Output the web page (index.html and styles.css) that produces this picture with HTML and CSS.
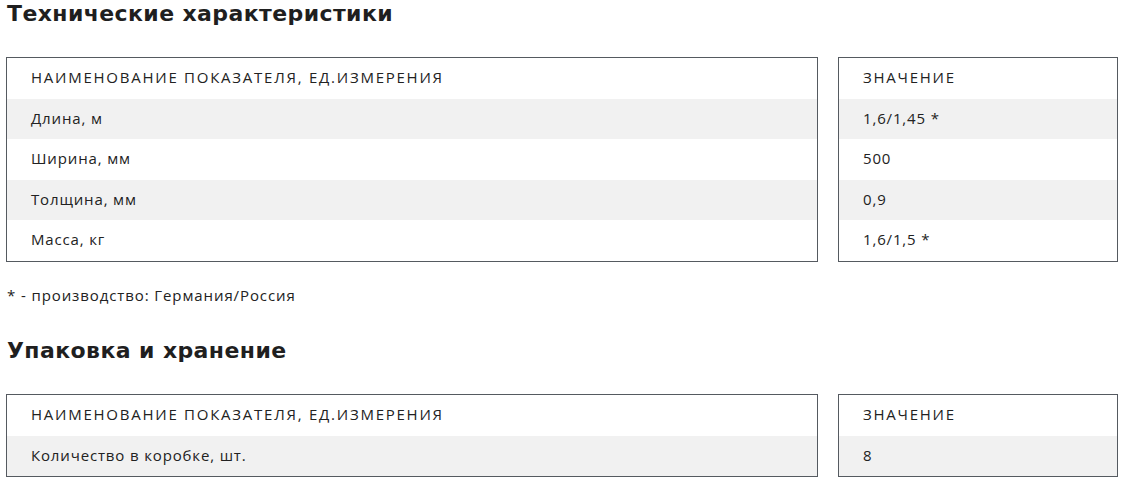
FILE: index.html
```html
<!DOCTYPE html>
<html lang="ru">
<head>
<meta charset="utf-8">
<link rel="stylesheet" href="styles.css">
</head>
<body>
<div class="page">
  <h2 class="title">Технические характеристики</h2>
  <div class="tables">
    <div class="tbl tbl-name">
      <div class="row head">НАИМЕНОВАНИЕ ПОКАЗАТЕЛЯ, ЕД.ИЗМЕРЕНИЯ</div>
      <div class="row alt">Длина, м</div>
      <div class="row">Ширина, мм</div>
      <div class="row alt">Толщина, мм</div>
      <div class="row">Масса, кг</div>
    </div>
    <div class="tbl tbl-value">
      <div class="row head">ЗНАЧЕНИЕ</div>
      <div class="row alt">1,6/1,45 *</div>
      <div class="row">500</div>
      <div class="row alt">0,9</div>
      <div class="row">1,6/1,5 *</div>
    </div>
  </div>
  <p class="note">* - производство: Германия/Россия</p>
  <h2 class="title title-2">Упаковка и хранение</h2>
  <div class="tables">
    <div class="tbl tbl-name">
      <div class="row head">НАИМЕНОВАНИЕ ПОКАЗАТЕЛЯ, ЕД.ИЗМЕРЕНИЯ</div>
      <div class="row alt">Количество в коробке, шт.</div>
    </div>
    <div class="tbl tbl-value">
      <div class="row head">ЗНАЧЕНИЕ</div>
      <div class="row alt">8</div>
    </div>
  </div>
</div>
</body>
</html>
```
FILE: styles.css
```css
html, body {
  margin: 0;
  padding: 0;
  background: #fff;
}
.page {
  padding: 0 8px 0 6px;
  font-family: "Open Sans", "Noto Sans", sans-serif;
  color: #222;
}
.title {
  margin: 0;
  padding-left: 1px;
  font-family: "DejaVu Sans", sans-serif;
  font-size: 22px;
  line-height: 28px;
  font-weight: 700;
  letter-spacing: 0.4px;
  color: #1f1f1f;
}
.tables {
  display: flex;
  gap: 20px;
  margin-top: 29px;
}
.tbl {
  border: 1px solid #555a60;
}
.tbl-name {
  flex: 1;
}
.tbl-value {
  width: 278px;
}
.row {
  height: 40.6px;
  line-height: 39px;
  padding-left: 24px;
  font-size: 15px;
  letter-spacing: 0.85px;
  white-space: nowrap;
}
.row.head {
  letter-spacing: 1.75px;
}
.row.alt {
  background: #f1f1f1;
}
.note {
  margin: 24px 0 0 1px;
  font-size: 15px;
  line-height: 18px;
  letter-spacing: 0.9px;
}
.title-2 {
  margin-top: 33px;
}
```
